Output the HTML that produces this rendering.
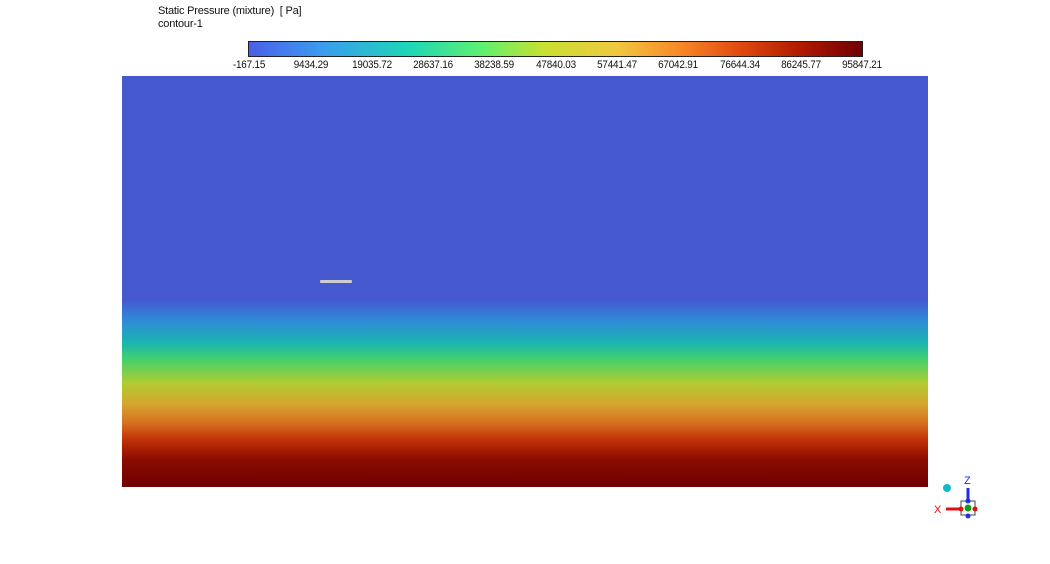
<!DOCTYPE html>
<html><head><style>
body{margin:0;width:1050px;height:564px;background:#fff;position:relative;overflow:hidden;font-family:"Liberation Sans",sans-serif;}
.t{position:absolute;font-size:11px;color:#111;letter-spacing:-0.2px;}
#bar{position:absolute;left:248px;top:41px;width:613px;height:14px;border:1px solid #222;
background:linear-gradient(to right,#4a5fe8 0%,#3b9cf0 12%,#1ed6b8 26%,#5ef070 38%,#c8e030 48%,#f0c840 60%,#f88a28 70%,#e04a10 80%,#b01a00 90%,#700000 100%);}
.lb{position:absolute;top:59px;font-size:11px;transform:translateX(-50%) scaleX(0.9);color:#111;letter-spacing:-0.2px;}
#dom{position:absolute;left:122px;top:76px;width:806px;height:411px;
background:linear-gradient(to bottom,#4658ce 0%,#4658ce 54.5%,#2f8ad8 59.4%,#1ab5b0 65%,#45d26a 69.1%,#b0cc30 74.7%,#d4a830 79.6%,#d87020 84.4%,#c03008 88.6%,#8a0c00 93.4%,#6e0000 100%);}
</style></head><body>
<div class="t" style="left:158px;top:5px">Static Pressure (mixture)&nbsp; [ Pa]</div>
<div class="t" style="left:158px;top:18px">contour-1</div>
<div id="bar"></div>
<div class="lb" style="left:249px">-167.15</div>
<div class="lb" style="left:311px">9434.29</div>
<div class="lb" style="left:372px">19035.72</div>
<div class="lb" style="left:433px">28637.16</div>
<div class="lb" style="left:494px">38238.59</div>
<div class="lb" style="left:556px">47840.03</div>
<div class="lb" style="left:617px">57441.47</div>
<div class="lb" style="left:678px">67042.91</div>
<div class="lb" style="left:740px">76644.34</div>
<div class="lb" style="left:801px">86245.77</div>
<div class="lb" style="left:862px">95847.21</div>
<div id="dom"></div>
<div style="position:absolute;left:320px;top:280px;width:32px;height:3px;background:#ccc;border-radius:1px"></div>
<svg style="position:absolute;left:930px;top:470px" width="60" height="60">
<circle cx="17" cy="18" r="4" fill="#10b8c8"/>
<rect x="31" y="31" width="14" height="14" fill="#fff" stroke="#444"/>
<circle cx="31" cy="39" r="2.5" fill="#e01010"/>
<circle cx="45" cy="39" r="2.5" fill="#e01010"/>
<circle cx="38" cy="31" r="2.5" fill="#2030e0"/>
<circle cx="38" cy="46" r="2.5" fill="#2030e0"/>
<line x1="38" y1="31" x2="38" y2="18" stroke="#2030e0" stroke-width="3"/>
<text x="34" y="14" font-size="11" fill="#2030e0" font-family="Liberation Sans">Z</text>
<line x1="31" y1="39" x2="16" y2="39" stroke="#e01010" stroke-width="3"/>
<text x="4" y="43" font-size="11" fill="#e01010" font-family="Liberation Sans">X</text>
<circle cx="38" cy="38" r="3.5" fill="#10a010"/>
</svg>
</body></html>
